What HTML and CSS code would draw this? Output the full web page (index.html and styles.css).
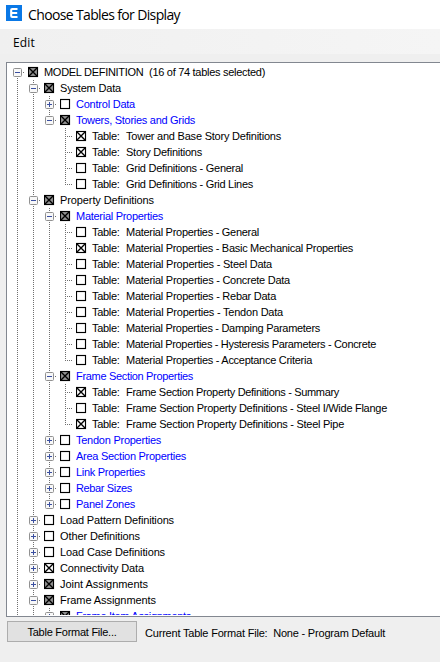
FILE: index.html
```html
<!DOCTYPE html>
<html lang="en">
<head>
<meta charset="utf-8">
<title>Choose Tables for Display</title>
<link rel="stylesheet" href="styles.css">
</head>
<body>
<header class="titlebar">
  <svg class="logo" width="16" height="16" viewBox="0 0 16 16"><rect width="16" height="16" fill="#0a78e6"/><path d="M11.5 4H6.2Q5.2 4 5.2 5V11Q5.2 12 6.2 12H11.5M5.5 8H11.2" fill="none" stroke="#fff" stroke-width="2.1"/></svg>
  <h1 class="title"><span data-width="152">Choose Tables for Display</span></h1>
</header>
<nav class="menubar"><span data-width="22">Edit</span></nav>
<main class="panel"><div class="tree" id="tree"></div></main>
<footer class="footer">
  <button class="button"><span data-width="89">Table Format File...</span></button>
  <p class="status"><span data-width="240">Current Table Format File:&nbsp; None - Program Default</span></p>
</footer>
<script src="tree.js"></script>
</body>
</html>
```
FILE: styles.css
```css
* { box-sizing: border-box; }
body {
  margin: 0;
  width: 440px;
  height: 662px;
  overflow: hidden;
  background: #efefef;
  color: #000;
  font: 11px/16px "Liberation Sans", Arial, sans-serif;
  display: flex;
  flex-direction: column;
}
.titlebar {
  height: 29px;
  flex: none;
  display: flex;
  align-items: flex-start;
  gap: 6px;
  padding: 5px 0 0 6px;
  background: #fff;
}
.logo { display: block; flex: none; }
.title {
  margin: 0;
  font: 400 14px/20px "Open Sans", "Noto Sans", sans-serif;
  white-space: nowrap;
}
.menubar {
  height: 25px;
  flex: none;
  padding: 4px 0 0 13px;
  font: 400 12px/20px "Open Sans", "Noto Sans", sans-serif;
  background: linear-gradient(90deg, #f0f0f0, #f5f5f5);
}
.panel {
  height: 555px;
  flex: none;
  margin: 8px 0 0 6px;
  padding: 1px 0 1px 2px;
  background: #fff;
  border: 1px solid #828790;
  border-right: 0;
}
.tree { height: 551px; overflow: hidden; }
.row { display: flex; height: 16px; white-space: pre; }
.cell { width: 16px; height: 16px; flex: none; display: block; }
.dots { stroke: #707070; stroke-dasharray: 1 1; fill: none; }
.box { fill: #f8f8f8; stroke: #919191; }
.sign { stroke: #3a4fa0; fill: none; }
.check { width: 13px; height: 16px; flex: none; display: block; margin-left: 3px; }
.check rect { fill: #fff; stroke: #000; stroke-width: 1.15; }
.check.partial rect { fill: #929292; }
.check path { stroke: #000; stroke-width: 1.4; fill: none; }
.label { margin-left: 3px; }
.keyword { margin-right: 1px; }
.group { color: #0000ff; }
.footer { display: flex; padding: 4px 0 0 7px; }
.button {
  width: 130px;
  height: 21px;
  padding: 0;
  background: #e1e1e1;
  border: 1px solid #adadad;
  font: inherit;
  color: #000;
  white-space: nowrap;
}
.status { margin: 4px 0 0 8px; white-space: nowrap; }
```
FILE: tree.js
```js
// [guide columns, level, kind (+, -, leaf, last leaf; "e" ends its branch), check state, label, label width]
const rows = [
  ["", 0, "-", "partial", "MODEL DEFINITION  (16 of 74 tables selected)", 221],
  ["0", 1, "-", "partial", "System Data", 61],
  ["01", 2, "+", "", "Control Data", 59],
  ["01", 2, "-e", "partial", "Towers, Stories and Grids", 119],
  ["01", 3, "leaf", "on", "Table:  Tower and Base Story Definitions", 189],
  ["01", 3, "leaf", "on", "Table:  Story Definitions", 110],
  ["01", 3, "leaf", "", "Table:  Grid Definitions - General", 151],
  ["01", 3, "last", "", "Table:  Grid Definitions - Grid Lines", 161],
  ["0", 1, "-", "partial", "Property Definitions", 94],
  ["01", 2, "-", "partial", "Material Properties", 87],
  ["012", 3, "leaf", "", "Table:  Material Properties - General", 167],
  ["012", 3, "leaf", "on", "Table:  Material Properties - Basic Mechanical Properties", 261],
  ["012", 3, "leaf", "", "Table:  Material Properties - Steel Data", 180],
  ["012", 3, "leaf", "", "Table:  Material Properties - Concrete Data", 198],
  ["012", 3, "leaf", "", "Table:  Material Properties - Rebar Data", 184],
  ["012", 3, "leaf", "", "Table:  Material Properties - Tendon Data", 191],
  ["012", 3, "leaf", "", "Table:  Material Properties - Damping Parameters", 228],
  ["012", 3, "leaf", "", "Table:  Material Properties - Hysteresis Parameters - Concrete", 284],
  ["012", 3, "last", "", "Table:  Material Properties - Acceptance Criteria", 220],
  ["01", 2, "-", "partial", "Frame Section Properties", 117],
  ["012", 3, "leaf", "on", "Table:  Frame Section Property Definitions - Summary", 247],
  ["012", 3, "leaf", "", "Table:  Frame Section Property Definitions - Steel I/Wide Flange", 295],
  ["012", 3, "last", "on", "Table:  Frame Section Property Definitions - Steel Pipe", 252],
  ["01", 2, "+", "", "Tendon Properties", 85],
  ["01", 2, "+", "", "Area Section Properties", 110],
  ["01", 2, "+", "", "Link Properties", 69],
  ["01", 2, "+", "", "Rebar Sizes", 56],
  ["01", 2, "+e", "", "Panel Zones", 59],
  ["0", 1, "+", "", "Load Pattern Definitions", 114],
  ["0", 1, "+", "", "Other Definitions", 80],
  ["0", 1, "+", "", "Load Case Definitions", 105],
  ["0", 1, "+", "on", "Connectivity Data", 84],
  ["0", 1, "+", "partial", "Joint Assignments", 88],
  ["0", 1, "-", "partial", "Frame Assignments", 96],
  ["01", 2, "+", "partial", "Frame Item Assignments", 115]
];

const svg = (cls, width, body) =>
  `<svg class="${cls}" width="${width}" height="16" viewBox="0 0 ${width} 16">${body}</svg>`;
const dots = d => `<path class="dots" d="${d}"/>`;

function nodeCell(kind, level) {
  if (kind === "leaf") return svg("cell", 16, dots("M8.5 0V16M8 8.5H16"));
  if (kind === "last") return svg("cell", 16, dots("M8.5 0V9M8 8.5H16"));
  const above = level ? "M8.5 0V4" : "";
  const below = kind.endsWith("e") ? "" : "M8.5 14V16";
  const plus = kind[0] === "+" ? "M8.5 6V11" : "";
  return svg("cell", 16, dots(above + below + "M14 8.5H18") +
    `<rect class="box" x="4.5" y="4.5" width="8" height="8" rx="1"/>` +
    `<path class="sign" d="M6 8.5H11${plus}"/>`);
}

function checkCell(state) {
  const cross = state ? `<path d="M1 4L9 12M9 4L1 12"/>` : "";
  return svg("check " + state, 13, `<rect x=".5" y="3.5" width="9" height="9"/>${cross}`);
}

// Leaf labels keep "Table:" apart from the table's name.
function labelText(text, width) {
  if (!text.startsWith("Table:")) return `<span data-width="${width}">${text}</span>`;
  return `<span class="keyword" data-width="33">Table:  </span>` +
    `<span data-width="${width - 34}">${text.slice(8)}</span>`;
}

document.getElementById("tree").innerHTML = rows.map(([guides, level, kind, state, text, width]) => {
  let cells = "";
  for (let i = 0; i < level; i++) {
    cells += svg("cell", 16, guides.includes(i) ? dots("M8.5 0V16") : "");
  }
  return `<div class="row">${cells}${nodeCell(kind, level)}${checkCell(state)}` +
    `<span class="label ${level === 2 ? "group" : ""}">${labelText(text, width)}</span></div>`;
}).join("");

// Space the letters so that each label takes its design width.
document.querySelectorAll("[data-width]").forEach(el => {
  const gap = (el.dataset.width - el.getBoundingClientRect().width) / el.textContent.length;
  el.style.letterSpacing = gap.toFixed(3) + "px";
});
```
